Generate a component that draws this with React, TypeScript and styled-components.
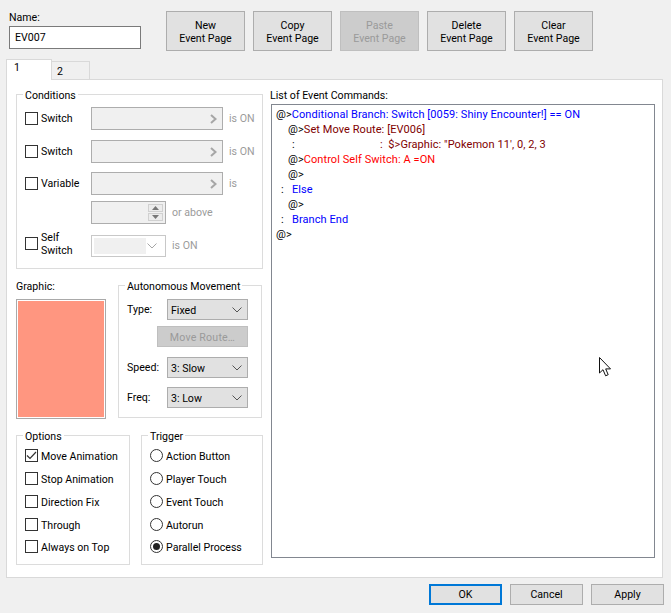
import { FC, ReactNode } from 'react';
import styled, { createGlobalStyle } from 'styled-components';

const GlobalStyle = createGlobalStyle`
  html, body {
    margin: 0;
    padding: 0;
    background: #f0f0f0;
  }
  * {
    box-sizing: border-box;
  }
`;

const Chevron: FC<{ $right?: boolean; color?: string }> = ({ $right, color = '#555' }) =>
  $right ? (
    <svg width="7" height="10" viewBox="0 0 7 10">
      <polyline points="1,1 5.5,5 1,9" fill="none" stroke={color} strokeWidth="2" />
    </svg>
  ) : (
    <svg width="10" height="6" viewBox="0 0 10 6">
      <polyline points="0.5,0.5 5,5 9.5,0.5" fill="none" stroke={color} strokeWidth="1" />
    </svg>
  );

const Check: FC<{ label: ReactNode; checked?: boolean }> = ({ label, checked }) => (
  <OptionRow>
    <CheckBox>
      {checked && (
        <svg width="11" height="11" viewBox="0 0 11 11">
          <polyline points="1,5.5 4,8.5 10,2" fill="none" stroke="#333" strokeWidth="1.2" />
        </svg>
      )}
    </CheckBox>
    <OptionLabel>{label}</OptionLabel>
  </OptionRow>
);

const Radio: FC<{ label: string; checked?: boolean }> = ({ label, checked }) => (
  <OptionRow>
    <RadioBox>{checked && <RadioDot />}</RadioBox>
    <OptionLabel>{label}</OptionLabel>
  </OptionRow>
);

const Combo: FC<{ value: string }> = ({ value }) => (
  <ComboBox>
    <span>{value}</span>
    <Chevron />
  </ComboBox>
);

const App: FC = () => (
  <Window>
    <GlobalStyle />
    <Header>
      <NameBlock>
        <NameLabel>Name:</NameLabel>
        <NameInput>EV007</NameInput>
      </NameBlock>
      <PageButtons>
        <PageButton>New<br />Event Page</PageButton>
        <PageButton>Copy<br />Event Page</PageButton>
        <PageButton $disabled>Paste<br />Event Page</PageButton>
        <PageButton>Delete<br />Event Page</PageButton>
        <PageButton>Clear<br />Event Page</PageButton>
      </PageButtons>
    </Header>

    <Tabs>
      <Tab $active>1</Tab>
      <Tab>2</Tab>
    </Tabs>

    <Panel>
      <LeftColumn>
        <Group $height={184}>
          <Legend>Conditions</Legend>
          <ConditionRow $top={4}>
            <Check label="Switch" />
            <PickerBox $wide><Chevron $right color="#a6a6a6" /></PickerBox>
            <DimText>is ON</DimText>
          </ConditionRow>
          <ConditionRow $top={10}>
            <Check label="Switch" />
            <PickerBox $wide><Chevron $right color="#a6a6a6" /></PickerBox>
            <DimText>is ON</DimText>
          </ConditionRow>
          <ConditionRow $top={9}>
            <Check label="Variable" />
            <PickerBox $wide><Chevron $right color="#a6a6a6" /></PickerBox>
            <DimText>is</DimText>
          </ConditionRow>
          <ConditionRow $top={6}>
            <span />
            <PickerBox>
              <Spinner>
                <SpinArrow>
                  <svg width="7" height="4" viewBox="0 0 7 4"><polygon points="3.5,0 7,4 0,4" fill="#777" /></svg>
                </SpinArrow>
                <SpinArrow>
                  <svg width="7" height="4" viewBox="0 0 7 4"><polygon points="0,0 7,0 3.5,4" fill="#777" /></svg>
                </SpinArrow>
              </Spinner>
            </PickerBox>
            <DimText>or above</DimText>
          </ConditionRow>
          <ConditionRow $top={10}>
            <SelfCheck>
              <Check label={<>Self<br />Switch</>} />
            </SelfCheck>
            <SelfCombo>
              <SelfFill />
              <Chevron color="#a6a6a6" />
            </SelfCombo>
            <DimText>is ON</DimText>
          </ConditionRow>
        </Group>

        <MiddleRow>
          <GraphicBlock>
            <GraphicLabel>Graphic:</GraphicLabel>
            <GraphicBox />
          </GraphicBlock>
          <Group $height={142} $width={144}>
            <Legend>Autonomous Movement</Legend>
            <MoveRow $top={5}>
              <MoveLabel>Type:</MoveLabel>
              <Combo value="Fixed" />
            </MoveRow>
            <MoveRouteButton>Move Route…</MoveRouteButton>
            <MoveRow $top={10}>
              <MoveLabel>Speed:</MoveLabel>
              <Combo value="3: Slow" />
            </MoveRow>
            <MoveRow $top={9}>
              <MoveLabel>Freq:</MoveLabel>
              <Combo value="3: Low" />
            </MoveRow>
          </Group>
        </MiddleRow>

        <BottomRow>
          <Group $height={139} $width={114}>
            <Legend>Options</Legend>
            <OptionList>
              <Check label="Move Animation" checked />
              <Check label="Stop Animation" />
              <Check label="Direction Fix" />
              <Check label="Through" />
              <Check label="Always on Top" />
            </OptionList>
          </Group>
          <Group $height={139} $width={122}>
            <Legend>Trigger</Legend>
            <OptionList>
              <Radio label="Action Button" />
              <Radio label="Player Touch" />
              <Radio label="Event Touch" />
              <Radio label="Autorun" />
              <Radio label="Parallel Process" checked />
            </OptionList>
          </Group>
        </BottomRow>
      </LeftColumn>

      <RightColumn>
        <ListLabel>List of Event Commands:</ListLabel>
        <CommandList>
          <Line>@&gt;<Cmd $c="#0000ff">Conditional Branch: Switch [0059: Shiny Encounter!] == ON</Cmd></Line>
          <Line $indent={12}>@&gt;<Cmd $c="#800000">Set Move Route: [EV006]</Cmd></Line>
          <Line $indent={16}>
            <Spacer $w={88}>:</Spacer>
            <Cmd $c="#800000">:&nbsp;&nbsp;$&gt;Graphic: &quot;Pokemon 11&apos;, 0, 2, 3</Cmd>
          </Line>
          <Line $indent={12}>@&gt;<Cmd $c="#ff0000">Control Self Switch: A =ON</Cmd></Line>
          <Line $indent={12}>@&gt;</Line>
          <Line $indent={5}><Spacer $w={11}>:</Spacer><Cmd $c="#0000ff">Else</Cmd></Line>
          <Line $indent={12}>@&gt;</Line>
          <Line $indent={5}><Spacer $w={11}>:</Spacer><Cmd $c="#0000ff">Branch End</Cmd></Line>
          <Line>@&gt;</Line>
        </CommandList>
      </RightColumn>
    </Panel>

    <Footer>
      <DialogButton $default>OK</DialogButton>
      <DialogButton>Cancel</DialogButton>
      <DialogButton>Apply</DialogButton>
    </Footer>

    <Cursor width="13" height="20" viewBox="0 0 13 20">
      <path
        d="M0.5 0.5 L0.5 16 L4 12.7 L6.6 18.8 L9.2 17.7 L6.7 11.9 L11.5 11.9 Z"
        fill="#fff"
        stroke="#111"
        strokeWidth="1"
        strokeLinejoin="round"
      />
    </Cursor>
  </Window>
);

const Window = styled.div`
  position: relative;
  width: 671px;
  height: 613px;
  overflow: hidden;
  display: flex;
  flex-direction: column;
  background: #f0f0f0;
  color: #000;
  font-family: Roboto, 'Liberation Sans', sans-serif;
  font-size: 10.6px;
  line-height: 14px;
`;

const Header = styled.div`
  display: flex;
  height: 59px;
  padding: 11px 0 0 9px;
`;

const NameBlock = styled.div`
  width: 132px;
  margin-right: 25px;
`;

const NameLabel = styled.div`
  height: 15px;
`;

const NameInput = styled.div`
  height: 23px;
  padding: 4px 0 0 5px;
  background: #fff;
  border: 1px solid #7a7a7a;
`;

const PageButtons = styled.div`
  display: flex;
  gap: 8px;
`;

const PageButton = styled.div<{ $disabled?: boolean }>`
  width: 79px;
  height: 40px;
  padding-top: 2px;
  display: flex;
  align-items: center;
  justify-content: center;
  text-align: center;
  line-height: 13px;
  background: ${(p) => (p.$disabled ? '#cccccc' : '#e1e1e1')};
  border: 1px solid ${(p) => (p.$disabled ? '#bfbfbf' : '#adadad')};
  color: ${(p) => (p.$disabled ? '#9a9a9a' : '#000')};
`;

const Tabs = styled.div`
  display: flex;
  align-items: flex-end;
  height: 21px;
  margin-bottom: -1px;
  padding-left: 6px;
`;

const Tab = styled.div<{ $active?: boolean }>`
  position: relative;
  z-index: 1;
  width: ${(p) => (p.$active ? 46 : 39)}px;
  height: ${(p) => (p.$active ? 21 : 19)}px;
  padding: ${(p) => (p.$active ? '1px 0 0 7px' : '3px 0 0 5px')};
  background: ${(p) => (p.$active ? '#fff' : '#f0f0f0')};
  border: 1px solid #d9d9d9;
  border-bottom: ${(p) => (p.$active ? 'none' : '1px solid #d9d9d9')};
  margin-left: ${(p) => (p.$active ? 0 : -1)}px;
`;

const Panel = styled.div`
  display: flex;
  width: 657px;
  height: 499px;
  margin-left: 6px;
  padding: 5px 0 0 9px;
  background: #fff;
  border: 1px solid #d9d9d9;
`;

const LeftColumn = styled.div`
  display: flex;
  flex-direction: column;
  width: 247px;
`;

const Group = styled.fieldset<{ $height: number; $width?: number }>`
  flex: none;
  width: ${(p) => (p.$width ? `${p.$width}px` : '100%')};
  height: ${(p) => p.$height}px;
  margin: 0;
  padding: 0;
  min-width: 0;
  border: 1px solid #dcdcdc;
`;

const Legend = styled.legend`
  margin-left: 6px;
  padding: 4px 2px 0;
  line-height: 14px;
`;

const ConditionRow = styled.div<{ $top: number }>`
  display: grid;
  grid-template-columns: 66px auto auto;
  grid-auto-rows: 23px;
  justify-content: start;
  align-items: center;
  margin-top: ${(p) => p.$top}px;
  padding-left: 8px;
`;

const OptionRow = styled.div`
  display: flex;
  align-items: center;
  gap: 3px;
  height: 13px;
  white-space: nowrap;
`;

const SelfCheck = styled.div`
  margin-bottom: 4px;
`;

const CheckBox = styled.div`
  flex: none;
  display: flex;
  align-items: center;
  justify-content: center;
  width: 13px;
  height: 13px;
  background: #fff;
  border: 1px solid #333;
`;

const RadioBox = styled(CheckBox)`
  border-radius: 50%;
`;

const RadioDot = styled.div`
  width: 7px;
  height: 7px;
  border-radius: 50%;
  background: #222;
`;

const OptionLabel = styled.span`
  line-height: 13px;
`;

const PickerBox = styled.div<{ $wide?: boolean }>`
  display: flex;
  align-items: center;
  justify-content: flex-end;
  width: ${(p) => (p.$wide ? 132 : 75)}px;
  height: 23px;
  padding-right: ${(p) => (p.$wide ? 5 : 0)}px;
  background: #f0f0f0;
  border: 1px solid #adadad;
`;

const Spinner = styled.div`
  display: flex;
  flex-direction: column;
  gap: 1px;
  margin-right: 2px;
`;

const SpinArrow = styled.div`
  display: flex;
  align-items: center;
  justify-content: center;
  width: 15px;
  height: 8px;
  background: #ececec;
  border: 1px solid #d0d0d0;
`;

const SelfCombo = styled.div`
  display: flex;
  align-items: center;
  justify-content: space-between;
  width: 75px;
  height: 22px;
  padding: 2px 8px 2px 2px;
  background: #fff;
  border: 1px solid #c8c8c8;
`;

const SelfFill = styled.div`
  width: 52px;
  height: 16px;
  background: #f0f0f0;
`;

const DimText = styled.span`
  margin-left: 6px;
  color: #9b9b9b;
`;

const MiddleRow = styled.div`
  display: flex;
  justify-content: space-between;
  width: 246px;
  margin-top: 7px;
`;

const GraphicBlock = styled.div`
  width: 90px;
`;

const GraphicLabel = styled.div`
  height: 14px;
  margin: 4px 0 5px;
`;

const GraphicBox = styled.div`
  height: 120px;
  background: #ff9680;
  border: 1px solid #a9a9a9;
  box-shadow: inset 0 0 0 1px #fff;
`;

const MoveRow = styled.div<{ $top: number }>`
  display: flex;
  align-items: center;
  justify-content: space-between;
  margin-top: ${(p) => p.$top}px;
  padding: 0 13px 0 8px;
`;

const MoveLabel = styled.span`
  line-height: 14px;
`;

const ComboBox = styled.div`
  display: flex;
  align-items: center;
  justify-content: space-between;
  width: 81px;
  height: 21px;
  padding: 0 5px 0 3px;
  background: #e1e1e1;
  border: 1px solid #adadad;

  span {
    padding-top: 2px;
  }
`;

const MoveRouteButton = styled.div`
  display: flex;
  align-items: center;
  justify-content: center;
  width: 91px;
  height: 21px;
  margin: 6px 0 0 38px;
  padding-top: 2px;
  letter-spacing: 0.2px;
  background: #cccccc;
  border: 1px solid #bfbfbf;
  color: #9a9a9a;
`;

const BottomRow = styled.div`
  display: flex;
  justify-content: space-between;
  margin-top: 7px;
`;

const OptionList = styled.div`
  display: flex;
  flex-direction: column;
  gap: 10px;
  padding: 5px 0 0 8px;

  ${OptionLabel} {
    padding-top: 2px;
  }
  ${OptionRow}:last-child {
    margin-top: -1px;
  }
`;

const RightColumn = styled.div`
  display: flex;
  flex-direction: column;
  margin-left: 7px;
`;

const ListLabel = styled.div`
  height: 19px;
  padding-top: 4px;
`;

const CommandList = styled.div`
  width: 384px;
  height: 454px;
  margin-left: 1px;
  padding: 2px 0 0 4px;
  background: #fff;
  border: 1px solid #828790;
  font-size: 11px;
  letter-spacing: 0.07px;
`;

const Line = styled.div<{ $indent?: number }>`
  height: 15px;
  line-height: 15px;
  padding-left: ${(p) => p.$indent ?? 0}px;
  white-space: nowrap;
`;

const Cmd = styled.span<{ $c: string }>`
  color: ${(p) => p.$c};
`;

const Spacer = styled.span<{ $w: number }>`
  display: inline-block;
  width: ${(p) => p.$w}px;
`;

const Footer = styled.div`
  display: flex;
  justify-content: flex-end;
  gap: 8px;
  padding: 6px 7px 0 0;
`;

const DialogButton = styled.div<{ $default?: boolean }>`
  display: flex;
  align-items: center;
  justify-content: center;
  width: 73px;
  height: 21px;
  background: #e1e1e1;
  border: ${(p) => (p.$default ? '2px solid #0078d7' : '1px solid #adadad')};
`;

// mouse pointer caught in the capture
const Cursor = styled.svg`
  position: absolute;
  left: 599px;
  top: 357px;
`;

export default App;
